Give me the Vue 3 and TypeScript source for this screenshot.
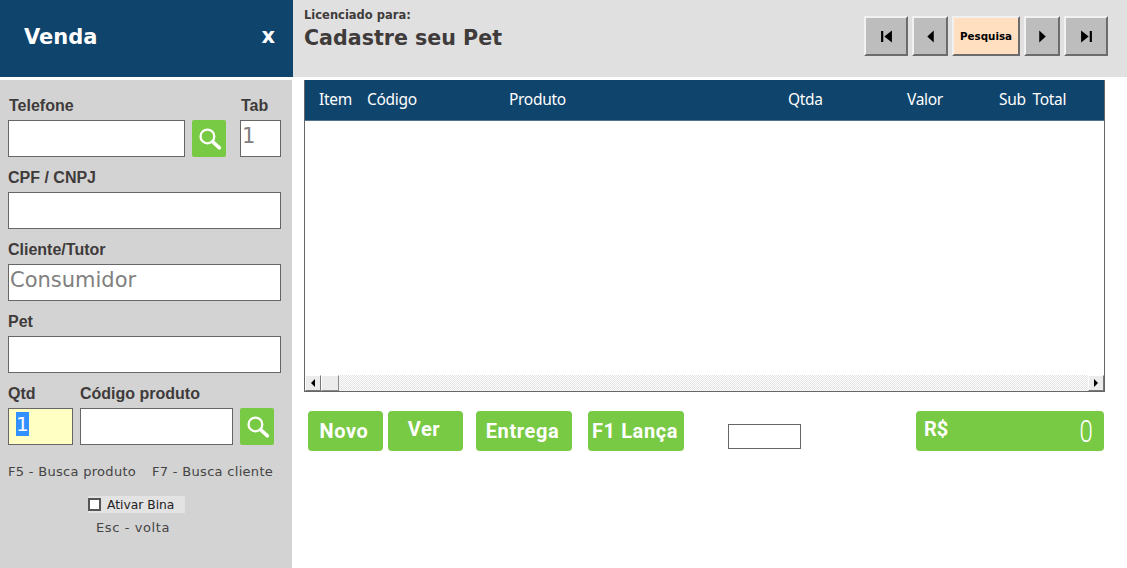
<template>
  <div class="page">
    <aside class="sidebar">
      <div class="brand">
        <h1>Venda</h1>
        <span class="close">x</span>
      </div>

      <form class="form" @submit.prevent>
        <div class="row">
          <div class="field phone">
            <label class="first">Telefone</label>
            <input type="text" />
          </div>
          <button class="search" type="button" aria-label="Buscar">
            <svg viewBox="0 0 24 24" width="25" height="25">
              <circle cx="10" cy="10" r="6.6" fill="none" stroke="#fff" stroke-width="2.2" />
              <path d="M15 15 L21.5 21" stroke="#fff" stroke-width="3.4" stroke-linecap="round" />
            </svg>
          </button>
          <div class="field tab">
            <label class="first">Tab</label>
            <input class="muted tall" type="text" value="1" />
          </div>
        </div>

        <div class="field">
          <label>CPF / CNPJ</label>
          <input type="text" />
        </div>
        <div class="field">
          <label>Cliente/Tutor</label>
          <input class="muted tall" type="text" value="Consumidor" />
        </div>
        <div class="field">
          <label>Pet</label>
          <input type="text" />
        </div>

        <div class="row">
          <div class="field qtd">
            <label>Qtd</label>
            <input ref="qtdInput" class="qtd-input" type="text" value="1" />
          </div>
          <div class="field code">
            <label>Código produto</label>
            <input type="text" />
          </div>
          <button class="search" type="button" aria-label="Buscar produto">
            <svg viewBox="0 0 24 24" width="25" height="25">
              <circle cx="10" cy="10" r="6.6" fill="none" stroke="#fff" stroke-width="2.2" />
              <path d="M15 15 L21.5 21" stroke="#fff" stroke-width="3.4" stroke-linecap="round" />
            </svg>
          </button>
        </div>

        <div class="shortcuts">
          <span>F5 - Busca produto</span>
          <span>F7 - Busca cliente</span>
        </div>
        <label class="bina">
          <input type="checkbox" />
          <span>Ativar Bina</span>
        </label>
        <p class="back">Esc - volta</p>
      </form>
    </aside>

    <div class="content">
      <header class="topbar">
        <div class="license">
          <small>Licenciado para:</small>
          <strong>Cadastre seu Pet</strong>
        </div>
        <nav class="pager">
          <button class="nav w44" type="button" aria-label="Primeiro">
            <svg viewBox="0 0 12 12" width="13" height="13"><path d="M1 1h2v10H1zM11 0.5v11L4 6z" /></svg>
          </button>
          <button class="nav w36" type="button" aria-label="Anterior">
            <svg viewBox="0 0 12 12" width="13" height="13"><path d="M9 0.5v11L3 6z" /></svg>
          </button>
          <button class="nav find" type="button">Pesquisa</button>
          <button class="nav w36" type="button" aria-label="Próximo">
            <svg viewBox="0 0 12 12" width="13" height="13"><path d="M3 0.5v11L9 6z" /></svg>
          </button>
          <button class="nav w44" type="button" aria-label="Último">
            <svg viewBox="0 0 12 12" width="13" height="13"><path d="M1 0.5v11L8 6zM9 1h2v10H9z" /></svg>
          </button>
        </nav>
      </header>

      <main class="main">
        <section class="grid">
          <div class="grid-head">
            <span v-for="col in columns" :key="col.name" :style="{ width: col.width + 'px' }">{{ col.name }}</span>
          </div>
          <div class="grid-body"></div>
          <div class="scrollbar">
            <span class="arrow">
              <svg viewBox="0 0 6 8" width="6" height="8"><path d="M5 0v8L1 4z" /></svg>
            </span>
            <span class="thumb"></span>
            <span class="track"></span>
            <span class="arrow">
              <svg viewBox="0 0 6 8" width="6" height="8"><path d="M1 0v8l4-4z" /></svg>
            </span>
          </div>
        </section>

        <div class="actions">
          <button class="action novo" type="button">Novo</button>
          <button class="action ver" type="button">Ver</button>
          <button class="action entrega" type="button">Entrega</button>
          <button class="action lanca" type="button">F1 Lança</button>
          <input class="mini" type="text" />
          <div class="total">
            <span class="currency">R$</span>
            <span class="amount">0</span>
          </div>
        </div>
      </main>
    </div>
  </div>
</template>

<script setup lang="ts">
import { onMounted, ref } from 'vue'

interface Column {
  name: string
  width: number
}

const columns: Column[] = [
  { name: 'Item', width: 48 },
  { name: 'Código', width: 142 },
  { name: 'Produto', width: 279 },
  { name: 'Qtda', width: 119 },
  { name: 'Valor', width: 92 },
  { name: 'Sub Total', width: 80 }
]

const qtdInput = ref<HTMLInputElement | null>(null)

onMounted(() => {
  qtdInput.value?.focus()
  qtdInput.value?.select()
})
</script>

<style scoped>
.page {
  display: flex;
  width: 1127px;
  height: 568px;
  overflow: hidden;
  background: #fff;
}

.sidebar {
  width: 293px;
  flex: none;
  display: flex;
  flex-direction: column;
}

.brand {
  height: 77px;
  flex: none;
  padding: 0 18px 3px 24px;
  box-sizing: border-box;
  display: flex;
  align-items: center;
  justify-content: space-between;
  background: #0f446c;
  color: #fff;
  font-family: "DejaVu Sans", sans-serif;
  font-weight: 700;
}

.brand h1 {
  margin: 0;
  font-size: 21px;
  letter-spacing: 0;
}

.close {
  margin-top: -3px;
  font-size: 21px;
}

.form {
  flex: 1;
  margin-top: 3px;
  margin-right: 1px;
  padding: 15px 11px 0 8px;
  background: #d3d3d3;
  font-family: "Liberation Sans", sans-serif;
}

.row {
  display: flex;
  align-items: flex-end;
}

.field {
  display: flex;
  flex-direction: column;
}

.field label {
  height: 20px;
  margin: 10px 0 5px;
  font-size: 16px;
  line-height: 22px;
  font-weight: 700;
  color: #3f3b3b;
}

.field label.first {
  margin-top: 0;
  padding-left: 1px;
}

.field input {
  width: 100%;
  height: 37px;
  box-sizing: border-box;
  padding: 0 1px;
  border: 1px solid #666;
  border-radius: 0;
  outline: none;
  background: #fff;
  font-family: "DejaVu Sans", sans-serif;
  font-size: 20px;
}

.field input.muted {
  color: #808080;
}

.field input.tall {
  padding-bottom: 5px;
  font-size: 21px;
}

.phone {
  width: 177px;
}

.tab {
  width: 41px;
  margin-left: 14px;
}

.qtd {
  width: 65px;
}

.field .qtd-input {
  padding-bottom: 5px;
  padding-left: 7px;
  background: #ffffc4;
  font-size: 20px;
}

.qtd-input::selection {
  background: #3390ff;
  color: #fff;
}

.code {
  width: 153px;
  margin-left: 7px;
}

.search {
  width: 34px;
  height: 37px;
  margin-left: 7px;
  padding: 0;
  display: flex;
  align-items: center;
  justify-content: center;
  border: none;
  border-radius: 2px;
  background: #78c943;
}

.shortcuts {
  margin-top: 19px;
  display: flex;
  gap: 16px;
  font-family: "DejaVu Sans", sans-serif;
  font-size: 13px;
  letter-spacing: 0.3px;
  line-height: 16px;
  color: #444;
  white-space: nowrap;
}

.bina {
  width: 97px;
  height: 17px;
  margin: 16px 0 0 80px;
  display: flex;
  align-items: center;
  background: #e3e3e3;
  font-family: "DejaVu Sans", sans-serif;
  font-size: 12.3px;
  color: #222;
}

.bina input {
  width: 13px;
  height: 13px;
  margin: 0 6px 0 0;
  appearance: none;
  border: 2px solid #555;
  background: #fff;
  box-sizing: border-box;
}

.back {
  margin: 7px 0 0 88px;
  font-family: "DejaVu Sans", sans-serif;
  font-size: 13px;
  letter-spacing: 0.6px;
  line-height: 16px;
  color: #444;
}

.content {
  flex: 1;
  display: flex;
  flex-direction: column;
}

.topbar {
  height: 77px;
  flex: none;
  padding: 0 19px 0 11px;
  display: flex;
  justify-content: space-between;
  background: #e0e0e0;
}

.license {
  padding-top: 8px;
  display: flex;
  flex-direction: column;
  font-family: "DejaVu Sans", sans-serif;
  font-weight: 700;
  color: #3f3b3b;
}

.license small {
  font-size: 11.5px;
  line-height: 14px;
}

.license strong {
  font-size: 20.6px;
  line-height: 32px;
}

.pager {
  display: flex;
  gap: 4px;
  padding-top: 16px;
}

.nav {
  height: 40px;
  padding: 0;
  display: flex;
  align-items: center;
  justify-content: center;
  box-sizing: border-box;
  border: 2px solid;
  border-color: #f1f1f1 #6c6c6c #6c6c6c #f1f1f1;
  background: #bdbdbd;
}

.w44 {
  width: 44px;
}

.w36 {
  width: 36px;
}

.find {
  width: 68px;
  background: #ffdfc0;
  font-family: "DejaVu Sans", sans-serif;
  font-size: 10.3px;
  font-weight: 700;
  color: #000;
}

.main {
  padding: 3px 22px 0 11px;
}

.grid {
  width: 801px;
  height: 312px;
  box-sizing: border-box;
  display: flex;
  flex-direction: column;
  border-right: 1px solid #666;
  border-bottom: 1px solid #666;
  border-left: 1px solid #666;
}

.grid-head {
  height: 41px;
  flex: none;
  padding-left: 14px;
  display: flex;
  align-items: center;
  background: #0f446c;
  border-bottom: 1px solid #55738c;
  box-sizing: border-box;
  color: #fff;
  font-family: "Noto Sans", sans-serif;
  font-size: 15.5px;
  letter-spacing: -0.3px;
  word-spacing: 3px;
  white-space: nowrap;
}

.grid-head span {
  flex: none;
  margin-top: -3px;
}

.grid-body {
  flex: 1;
}

.scrollbar {
  height: 16px;
  flex: none;
  display: flex;
}

.arrow {
  width: 16px;
  display: flex;
  align-items: center;
  justify-content: center;
  box-sizing: border-box;
  background: #ececec;
  border: 1px solid;
  border-color: #fff #777 #777 #fff;
}

.thumb {
  width: 18px;
  box-sizing: border-box;
  background: #ececec;
  border: 1px solid;
  border-color: #fff #8a8a8a #8a8a8a #fff;
}

.track {
  flex: 1;
  background: repeating-conic-gradient(#e4e4e4 0 25%, #fff 0 50%) 0 0 / 2px 2px;
}

.actions {
  margin: 19px 0 0 4px;
  display: flex;
  align-items: center;
}

.action {
  height: 40px;
  padding: 0 3px 0 0;
  border: none;
  border-radius: 4px;
  background: #78c943;
  color: #fff;
  font-family: Roboto, sans-serif;
  font-size: 20px;
  font-weight: 700;
  letter-spacing: 0.6px;
}

.novo {
  width: 75px;
}

.ver {
  width: 75px;
  margin-left: 5px;
  padding-bottom: 4px;
}

.entrega {
  width: 96px;
  margin-left: 13px;
}

.lanca {
  width: 96px;
  margin-left: 16px;
  padding-right: 2px;
}

.mini {
  width: 73px;
  height: 25px;
  margin: 10px 0 0 44px;
  box-sizing: border-box;
  border: 1px solid #666;
  border-radius: 0;
  background: #fff;
}

.total {
  width: 188px;
  height: 40px;
  margin-left: 115px;
  padding: 0 11px 0 8px;
  box-sizing: border-box;
  display: flex;
  align-items: center;
  justify-content: space-between;
  border-radius: 4px;
  background: #78c943;
  color: #fff;
  font-family: Roboto, sans-serif;
}

.currency {
  margin-top: -4px;
  font-size: 20px;
  font-weight: 700;
}

.amount {
  font-size: 32px;
  font-weight: 300;
  transform: scaleX(0.75);
  transform-origin: right center;
}
</style>
